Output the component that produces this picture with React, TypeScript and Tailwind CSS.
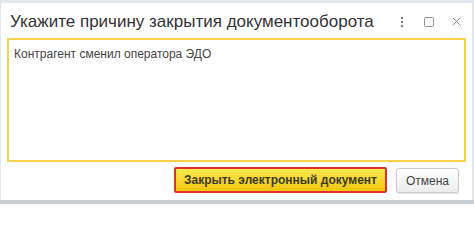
import { MoreVertical, Square, X } from "lucide-react";

export default function App() {
  return (
    <div className="w-[474px] h-[204px] bg-[#e1e7ee] pt-[3px] pl-px pr-[2px] border-b-[4px] border-[#c8cdd3] font-['Liberation_Sans',Arial,sans-serif]">
      <div className="h-full bg-white flex flex-col">
        {/* Title bar */}
        <div className="flex items-center h-[35px] pl-[9px] pr-[8px] pt-[2px]">
          <h1 className="flex-1 text-[17px] leading-none text-[#333]">
            Укажите причину закрытия документооборота
          </h1>
          <div className="flex items-center gap-[14px] text-[#777]">
            <MoreVertical className="w-[14px] h-[14px]" strokeWidth={2} />
            <Square className="w-[12px] h-[12px]" strokeWidth={1.6} />
            <X className="w-[15px] h-[15px]" strokeWidth={1.3} />
          </div>
        </div>

        {/* Reason field */}
        <div className="mx-[6px] h-[124px] border-2 border-[#f4d24e] px-[5px] pt-[5px]">
          <p className="text-[12px] text-[#444]">Контрагент сменил оператора ЭДО</p>
        </div>

        {/* Buttons */}
        <div className="flex justify-end gap-[9px] pr-[13px] pt-[5px]">
          <button className="h-[26px] px-[8px] border-2 border-[#e2302b] bg-gradient-to-b from-[#fbe94a] to-[#f1c600] text-[12px] font-bold text-[#3d3a1c] rounded-[2px]">
            Закрыть электронный документ
          </button>
          <button className="h-[25px] mt-px px-[9px] border border-[#c9c9c9] bg-gradient-to-b from-white to-[#ececec] text-[12px] text-[#444] rounded-[3px] shadow-[0_1px_1px_rgba(0,0,0,0.12)]">
            Отмена
          </button>
        </div>
      </div>
    </div>
  );
}
